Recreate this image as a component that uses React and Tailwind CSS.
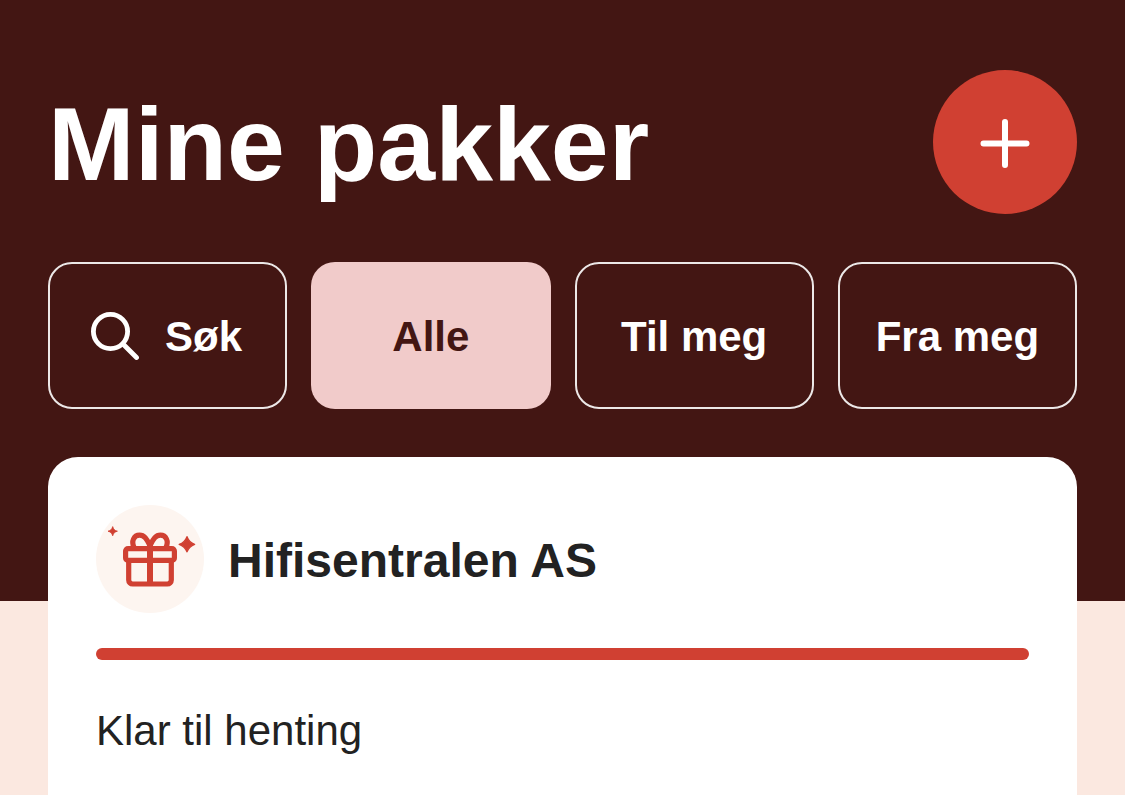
function PlusIcon() {
    return (<svg className="w-full h-full" viewBox="0 0 144 144" fill="none" stroke="currentColor" strokeWidth={6} strokeLinecap="round" aria-hidden="true">
      <path d="M50.5 73.5h43M72 52v43"/>
    </svg>);
}

function SearchIcon() {
    return (<svg className="w-12 h-12 shrink-0" viewBox="0 0 48 48" fill="none" stroke="currentColor" strokeWidth={4.8} strokeLinecap="round" aria-hidden="true">
      <circle cx="19.5" cy="19.5" r="17.1"/>
      <path d="M32.5 32.5l13 13"/>
    </svg>);
}

function GiftIcon() {
    return (<svg className="w-27 h-27 shrink-0" viewBox="0 0 108 108" fill="none" aria-hidden="true">
      <circle cx="54" cy="54" r="54" fill="#fdf5f0"/>
      <g stroke="#d04032" strokeWidth={5.2} strokeLinejoin="round">
        <rect x="29.6" y="43.6" width="48.8" height="11.8" rx="2.5"/>
        <path d="M32.7 56v19a4 4 0 0 0 4 4h34.6a4 4 0 0 0 4-4V56"/>
        <path d="M54 43.5V79" strokeWidth={6}/>
        <path d="M38.2 43C34.8 36 38 30.2 43.6 30.2C49 30.2 51 35 54 40.5"/>
        <path d="M69.8 43C73.2 36 70 30.2 64.4 30.2C59 30.2 57 35 54 40.5"/>
        <path d="M54 39V44" strokeWidth={6}/>
      </g>
      <g fill="#d04032" stroke="#d04032" strokeLinejoin="round">
        <path d="M91 31.7C92.6 36 94.5 38 98.6 39.3C94.5 40.9 92.6 42.7 91 46.8C89.4 42.7 87.5 40.9 83.2 39.3C87.5 38 89.4 36 91 31.7Z" strokeWidth={1.4}/>
        <path d="M16.7 21.6C17.5 24.4 18.6 25.5 21.4 26.2C18.6 27 17.5 28 16.7 30.8C15.9 28 14.8 27 12 26.2C14.8 25.5 15.9 24.4 16.7 21.6Z" strokeWidth={0.8}/>
      </g>
    </svg>);
}

const filters = [
    { id: 'all', label: 'Alle' },
    { id: 'to', label: 'Til meg' },
    { id: 'from', label: 'Fra meg' },
];

export default function App() {
    const active = 'all';
    return (<div className="flex flex-col min-h-screen bg-[#fbe8e0] font-['Liberation_Sans',Arial,sans-serif] text-[#222222]">
      <header className="bg-[#431613] px-12 pt-[70px] pb-48 text-white">
        <div className="flex items-center justify-between">
          <h1 className="pt-1 text-[104px] leading-[140px] font-bold">Mine pakker</h1>
          <button type="button" aria-label="Legg til pakke" className="w-36 h-36 shrink-0 rounded-full bg-[#d04032]">
            <PlusIcon />
          </button>
        </div>

        {/* Filters */}
        <div className="mt-12 grid grid-cols-4 gap-6 text-[42px] leading-12 font-bold">
          <button type="button" className="flex h-[147px] items-center justify-center gap-[26px] rounded-3xl border-2 border-white/90 pr-0.5">
            <SearchIcon />
            <span className="pt-0.5">Søk</span>
          </button>
          {filters.map((filter) => (<button key={filter.id} type="button" aria-pressed={filter.id === active} className={filter.id === active
                ? 'h-[147px] whitespace-nowrap rounded-3xl bg-[#f1cbca] pt-0.5 text-[#431613]'
                : 'h-[147px] whitespace-nowrap rounded-3xl border-2 border-white/90 pt-0.5'}>
              {filter.label}
            </button>))}
        </div>
      </header>

      {/* Parcel card */}
      <main className="-mt-36 mx-12 flex-1 rounded-t-[30px] bg-white p-12">
        <div className="flex items-center gap-6">
          <GiftIcon />
          <h2 className="pt-1 text-5xl font-bold">Hifisentralen AS</h2>
        </div>
        <div role="progressbar" aria-label="Klar til henting" aria-valuenow={100} className="mt-[35px] h-3 rounded-full bg-[#d04032]"/>
        <p className="mt-12 text-[42px] leading-[46px]">Klar til henting</p>
      </main>
    </div>);
}
